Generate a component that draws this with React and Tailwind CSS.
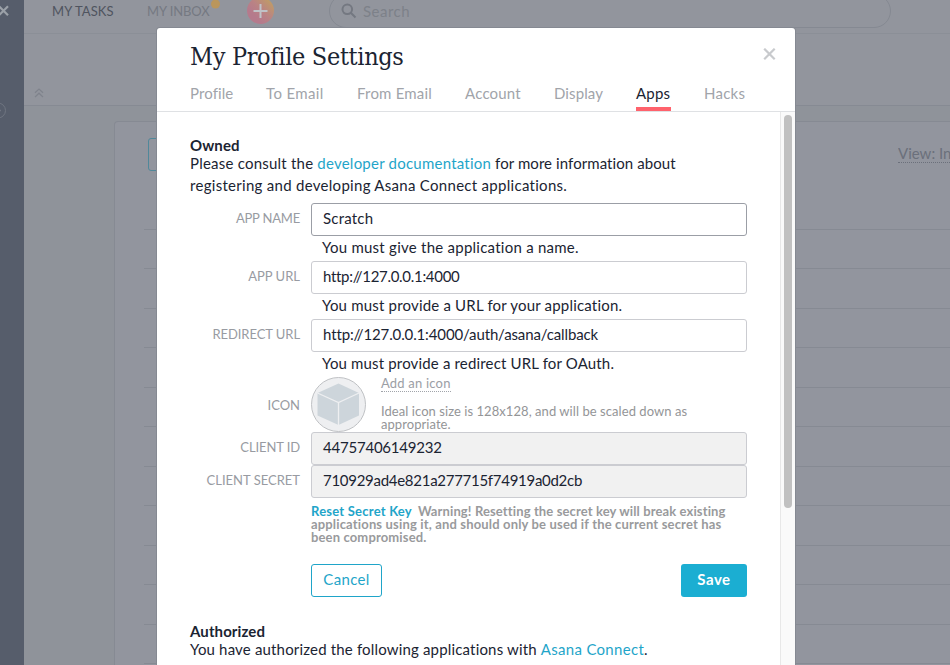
const tabs = [
  { label: "Profile", cls: "w-[43px] tracking-[0.1px] text-[#a1a4aa]" },
  { label: "To Email", cls: "w-[58px] tracking-[0.35px] text-[#a1a4aa]" },
  { label: "From Email", cls: "w-[75px] tracking-[0.2px] text-[#a1a4aa]" },
  { label: "Account", cls: "w-[56px] tracking-[0.2px] text-[#a1a4aa]" },
  { label: "Display", cls: "w-[49px] tracking-[0.1px] text-[#a1a4aa]" },
  { label: "Apps", cls: "w-[35px] tracking-[0.2px] text-[#1b2432] border-b-4 border-[#ff626c]" },
  { label: "Hacks", cls: "w-[42px] tracking-[0.25px] text-[#a1a4aa]" },
];

const rowHeights = [
  "h-[39px]", "h-[40px]", "h-[39px]", "h-[40px]", "h-[39px]", "h-[40px]",
  "h-[39px]", "h-[40px]", "h-[39px]", "h-[40px]", "h-[39px]",
];

function Background() {
  return (
    <div className="flex h-full bg-[#8f939a]">
      <aside className="h-full w-6 shrink-0 overflow-hidden bg-[#565d6b]">
        <svg className="block h-[665px] w-6" viewBox="0 0 24 665" fill="none">
          <path d="M-1 6.200L8 15.200M8 6.200L-1 15.200" stroke="#9ba1a8" strokeWidth="2.200" />
          <circle cx="-2" cy="110.500" r="7.500" stroke="#6f7581" />
          <path d="M-2 110.500H1" stroke="#6f7581" strokeWidth="1.500" />
        </svg>
      </aside>
      <div className="flex min-w-0 flex-1 flex-col">
        <div className="relative h-[34px] shrink-0 border-b border-[#8b8f97] bg-[#92959d] text-[13px] leading-[22px]">
          <div className="flex h-[22px] tracking-[0.1px]">
            <span className="ml-7 w-[95px] text-[#4f545f]">MY TASKS</span>
            <span className="tracking-[-0.1px] text-[#757982]">MY INBOX</span>
          </div>
          <svg className="absolute left-[187px] top-0" width="70" height="28" viewBox="0 0 70 28" fill="none">
            <defs>
              <linearGradient id="omni" x1="0.150" y1="0.850" x2="0.850" y2="0.150">
                <stop offset="0.200" stopColor="#b57a8c" />
                <stop offset="0.550" stopColor="#ba8384" />
                <stop offset="1" stopColor="#bf9a68" />
              </linearGradient>
            </defs>
            <circle cx="4.500" cy="4" r="4.500" fill="#ba965c" />
            <circle cx="49.500" cy="10.500" r="13.500" fill="url(#omni)" />
            <path d="M49.500 4V18M42.500 11H56.500" stroke="#c0c2c7" strokeWidth="2" />
          </svg>
          <div className="absolute left-[305px] top-[-6px] flex h-[34px] w-[562px] items-center rounded-full border border-[#858992] pl-[11px]">
            <svg width="16" height="16" viewBox="0 0 16 16" fill="none" stroke="#747881" strokeWidth="2">
              <circle cx="6.300" cy="6.300" r="4.800" />
              <path d="M9.800 9.800L14.500 14.500" />
            </svg>
            <span className="mb-px ml-[6px] text-[15px] tracking-[0.5px] text-[#7d8189]">Search</span>
          </div>
        </div>
        <div className="h-[72px] shrink-0 border-b border-[#868a93] bg-[#92959d] pl-[10px] pt-[54px]">
          <svg width="10" height="10" viewBox="0 0 10 10" fill="none" stroke="#7f838c" strokeWidth="1.200">
            <path d="M1 4.800L5 1L9 4.800M1 9L5 5.200L9 9" />
          </svg>
        </div>
        <div className="flex-1 pl-[90px] pt-[15px]">
          <div className="h-full overflow-hidden rounded-tl border-l border-t border-[#868a93] bg-[#92959e]">
            <div className="ml-[29px]">
              <div className="flex h-[108px] items-start justify-between border-b border-[#868a93] pt-4">
                <div className="ml-1 h-[33px] w-20 rounded-[3px] border border-[#50889a]" />
                <div className="mt-[7px] w-[52px] overflow-hidden whitespace-nowrap border-b border-dotted border-[#6b707b] text-[15px] leading-[17px] text-[#6b707b]">View: Incomplete</div>
              </div>
              {rowHeights.map((h, i) => (
                <div key={i} className={`${h} border-b border-[#868a93]`} />
              ))}
            </div>
          </div>
        </div>
      </div>
    </div>
  );
}

function Field({ label, labelCls = "", boxCls = "", value, valueCls, help, helpCls }) {
  return (
    <div className="flex">
      <div className={`w-[110px] whitespace-nowrap pt-[7px] text-right text-[13px] leading-4 text-[#989ba2] ${labelCls}`}>{label}</div>
      <div className="ml-[11px] w-[436px]">
        <div className={`h-[33px] rounded-[3px] border pl-[11px] leading-[29px] ${boxCls}`}>
          <span className={valueCls}>{value}</span>
        </div>
        {help && <div className={`h-[25px] pl-[11px] leading-[22px] ${helpCls}`}>{help}</div>}
      </div>
    </div>
  );
}

export default function App() {
  return (
    <div className="relative h-[665px] w-[950px] overflow-hidden font-[Lato,sans-serif] text-[15px] text-[#1b2432]">
      <Background />
      <div className="absolute left-[157px] top-7 flex h-[660px] w-[638px] flex-col overflow-hidden rounded-t-[3px] bg-white shadow-[0_0_0_1px_#858992]">
        <header className="h-[84px] shrink-0 border-b border-[#dfe1e4] pl-[33px]">
          <div className="flex h-[55px] justify-between">
            <h1 className="pt-[13px] font-['DejaVu_Serif_Condensed','DejaVu_Serif',serif] text-[25px] leading-8 tracking-[-0.33px] [font-stretch:condensed]">My Profile Settings</h1>
            <svg className="mr-[19px] mt-5" width="13" height="13" viewBox="0 0 13 13" stroke="#c8cacd" strokeWidth="2.200">
              <path d="M1.200 0.700L11.700 11.200M11.700 0.700L1.200 11.200" />
            </svg>
          </div>
          <nav className="flex gap-[33px]">
            {tabs.map((t) => (
              <div key={t.label} className={`h-7 whitespace-nowrap leading-5 ${t.cls}`}>{t.label}</div>
            ))}
          </nav>
        </header>
        <div className="flex flex-1">
          <main className="w-[623px] pl-[33px] pt-6">
            <h2 className="h-[16px] font-bold leading-[18px] tracking-[0.1px]">Owned</h2>
            <p className="w-[520px] leading-[22px] tracking-[0.08px]">
              <span className="tracking-[0.22px]">Please consult the </span>
              <a className="tracking-[0.23px] text-[#1fa5c9]">developer documentation</a> for more information about
              <br />
              <span className="tracking-[0.29px]">registering and developing Asana Connect applications.</span>
            </p>
            <div className="mt-[7px]">
              <Field label="APP NAME" labelCls="tracking-[-0.2px]" boxCls="border-[#9b9ea6]" value="Scratch" valueCls="tracking-[0.2px]" help="You must give the application a name." helpCls="tracking-[0.25px]" />
              <Field label="APP URL" boxCls="border-[#cbccd1]" value="http://127.0.0.1:4000" valueCls="tracking-[-0.3px]" help="You must provide a URL for your application." helpCls="tracking-[0.19px]" />
              <Field label="REDIRECT URL" labelCls="tracking-[-0.06px]" boxCls="border-[#cbccd1]" value="http://127.0.0.1:4000/auth/asana/callback" valueCls="tracking-[-0.13px]" help="You must provide a redirect URL for OAuth." helpCls="tracking-[0.16px]" />
              <div className="flex h-[55px]">
                <div className="w-[110px] pt-5 text-right text-[13px] leading-4 text-[#989ba2]">ICON</div>
                <svg className="ml-[11px] shrink-0" width="55" height="55" viewBox="0 0 55 55">
                  <circle cx="27.500" cy="27.500" r="27" fill="#eeeff1" stroke="#bfc1c4" />
                  <path d="M27.500 6.500L48 16V38.500L27.500 48L6.500 38.500V16Z" fill="#cdd5db" />
                  <path d="M6.500 16L27.500 25.500L48 16M27.500 25.500V48" fill="none" stroke="#eeeff1" strokeWidth="1.300" />
                </svg>
                <div className="ml-[15px] w-[330px] text-[13px] leading-[13px] tracking-[0.06px] text-[#949597]">
                  <span className="inline-block h-[15px] border-b border-dotted border-[#a1a4aa] tracking-[0.2px] text-[#9b9ea5]">Add an icon</span>
                  <p className="mt-[13px]">Ideal icon size is 128x128, and will be scaled down as<br />appropriate.</p>
                </div>
              </div>
              <Field label="CLIENT ID" labelCls="tracking-[-0.1px]" boxCls="border-[#cbccd1] bg-[#f1f1f1]" value="44757406149232" valueCls="tracking-[-0.22px]" />
              <Field label="CLIENT SECRET" boxCls="border-[#cbccd1] bg-[#f1f1f1]" value="710929ad4e821a277715f74919a0d2cb" valueCls="tracking-[-0.28px]" />
            </div>
            <p className="ml-[121px] mt-[7px] whitespace-nowrap text-[13px] font-bold leading-[13px] tracking-[0.14px] text-[#999a9c]">
              <a className="mr-[6px] tracking-[0.22px] text-[#1fa5c9]">Reset Secret Key</a><span className="tracking-[0.12px]">Warning! Resetting the secret key will break existing</span>
              <br /><span className="tracking-[0.16px]">applications using it, and should only be used if the current secret has</span>
              <br />been compromised.
            </p>
            <div className="ml-[121px] mt-5 flex w-[436px] justify-between">
              <button className="h-[33px] w-[71px] rounded-[3px] border border-[#1fa5c9] pb-[3px] tracking-[0.35px] text-[#1fa5c9]">Cancel</button>
              <button className="h-[33px] w-[66px] rounded-[3px] bg-[#1baed2] pb-[3px] font-bold tracking-[0.5px] text-white">Save</button>
            </div>
            <h2 className="mt-[25px] h-[16px] font-bold leading-[18px] tracking-[0.1px]">Authorized</h2>
            <p className="leading-[22px] tracking-[0.17px]">
              You have authorized the following applications with <a className="tracking-[0.3px] text-[#1fa5c9]">Asana Connect</a>.
            </p>
          </main>
          <div className="w-[15px] border-l border-[#e8e8e8] bg-[#fafafa] pl-[3px] pt-[3px]">
            <div className="h-[393px] w-2 rounded-full bg-[#c1c1c1]" />
          </div>
        </div>
      </div>
    </div>
  );
}
